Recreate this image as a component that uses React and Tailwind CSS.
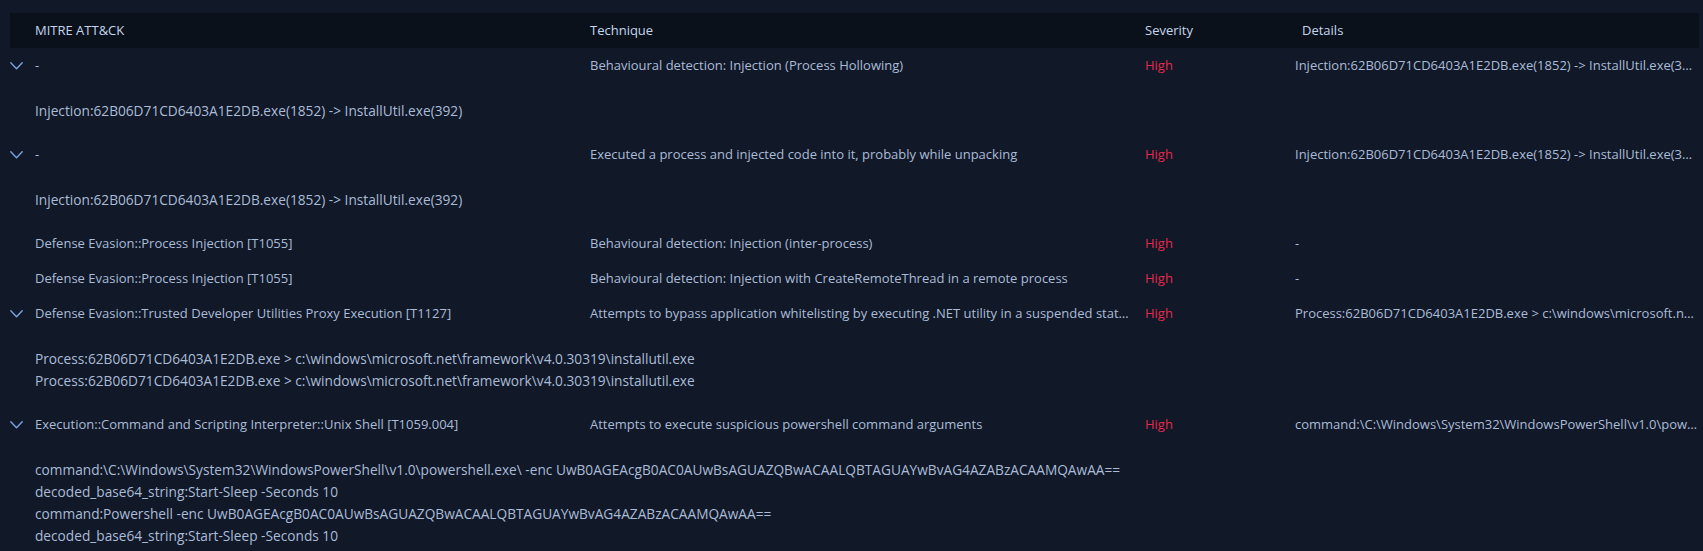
import React from "react";

const rows = [
  {
    mitre: "-",
    technique: "Behavioural detection: Injection (Process Hollowing)",
    severity: "High",
    details: "Injection:62B06D71CD6403A1E2DB.exe(1852) -> InstallUtil.exe(392)",
    lines: ["Injection:62B06D71CD6403A1E2DB.exe(1852) -> InstallUtil.exe(392)"],
  },
  {
    mitre: "-",
    technique: "Executed a process and injected code into it, probably while unpacking",
    severity: "High",
    details: "Injection:62B06D71CD6403A1E2DB.exe(1852) -> InstallUtil.exe(392)",
    lines: ["Injection:62B06D71CD6403A1E2DB.exe(1852) -> InstallUtil.exe(392)"],
  },
  {
    mitre: "Defense Evasion::Process Injection [T1055]",
    technique: "Behavioural detection: Injection (inter-process)",
    severity: "High",
    details: "-",
  },
  {
    mitre: "Defense Evasion::Process Injection [T1055]",
    technique: "Behavioural detection: Injection with CreateRemoteThread in a remote process",
    severity: "High",
    details: "-",
  },
  {
    mitre: "Defense Evasion::Trusted Developer Utilities Proxy Execution [T1127]",
    technique:
      "Attempts to bypass application whitelisting by executing .NET utility in a suspended state, potentially for injection",
    severity: "High",
    details:
      "Process:62B06D71CD6403A1E2DB.exe > c:\\windows\\microsoft.net\\framework\\v4.0.30319\\installutil.exe",
    lines: [
      "Process:62B06D71CD6403A1E2DB.exe > c:\\windows\\microsoft.net\\framework\\v4.0.30319\\installutil.exe",
      "Process:62B06D71CD6403A1E2DB.exe > c:\\windows\\microsoft.net\\framework\\v4.0.30319\\installutil.exe",
    ],
  },
  {
    mitre: "Execution::Command and Scripting Interpreter::Unix Shell [T1059.004]",
    technique: "Attempts to execute suspicious powershell command arguments",
    severity: "High",
    details:
      "command:\\C:\\Windows\\System32\\WindowsPowerShell\\v1.0\\powershell.exe\\ -enc UwB0AGEAcgB0AC0AUwBsAGUAZQBwACAALQBTAGUAYwBvAG4AZABzACAAMQAwAA==",
    lines: [
      "command:\\C:\\Windows\\System32\\WindowsPowerShell\\v1.0\\powershell.exe\\ -enc UwB0AGEAcgB0AC0AUwBsAGUAZQBwACAALQBTAGUAYwBvAG4AZABzACAAMQAwAA==",
      "decoded_base64_string:Start-Sleep -Seconds 10",
      "command:Powershell -enc UwB0AGEAcgB0AC0AUwBsAGUAZQBwACAALQBTAGUAYwBvAG4AZABzACAAMQAwAA==",
      "decoded_base64_string:Start-Sleep -Seconds 10",
    ],
  },
];

function Chevron() {
  return (
    <svg width="13" height="8" viewBox="0 0 13 8" fill="none" className="shrink-0">
      <polyline
        points="0.8,0.8 6.5,6.8 12.2,0.8"
        stroke="#7aa2e3"
        strokeWidth="1.4"
        strokeLinejoin="round"
        strokeLinecap="round"
      />
    </svg>
  );
}

export default function App() {
  return (
    <div
      className="min-h-[551px] bg-[#111827] pt-[13px] pl-[10px] text-[13px] text-[#aabcd8]"
      style={{ fontFamily: "'Open Sans', 'Noto Sans', sans-serif" }}
    >
      <div className="w-[1689px]">
        <div className="grid h-[35px] grid-cols-[565px_555px_150px_419px] items-center bg-[#0b111a] text-[#c4d6ee]">
          <div className="pl-[25px]">MITRE ATT&amp;CK</div>
          <div className="pl-[15px]">Technique</div>
          <div className="pl-[15px]">Severity</div>
          <div className="pl-[22px]">Details</div>
        </div>

        {rows.map((r, i) => (
          <div key={i}>
            <div className="grid h-[35px] grid-cols-[565px_555px_150px_419px] items-center">
              <div className="flex items-center">
                <div className="flex w-[25px] items-center">{r.lines && <Chevron />}</div>
                <span className="truncate">{r.mitre}</span>
              </div>
              <div className="truncate pl-[15px]">{r.technique}</div>
              <div className="pl-[15px] text-[#e3294d]">{r.severity}</div>
              <div className="truncate pl-[15px]">{r.details}</div>
            </div>
            {r.lines && (
              <div className="pt-[17px] pb-[15px] pl-[25px] text-[13.7px] leading-[22px]">
                {r.lines.map((l, j) => (
                  <div key={j}>{l}</div>
                ))}
              </div>
            )}
          </div>
        ))}
      </div>
    </div>
  );
}
